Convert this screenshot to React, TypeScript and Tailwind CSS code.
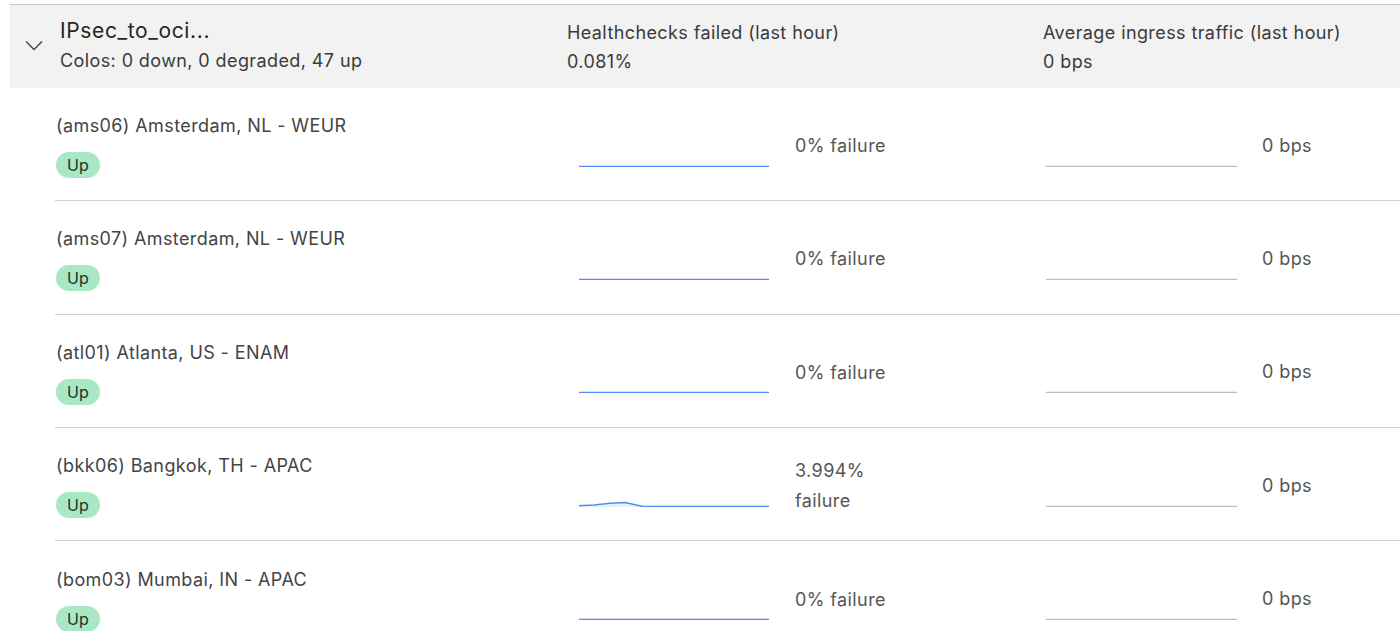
const colos = [
  { name: '(ams06) Amsterdam, NL - WEUR', failure: '0% failure', spike: false },
  { name: '(ams07) Amsterdam, NL - WEUR', failure: '0% failure', spike: false },
  { name: '(atl01) Atlanta, US - ENAM', failure: '0% failure', spike: false },
  { name: '(bkk06) Bangkok, TH - APAC', failure: '3.994% failure', spike: true },
  { name: '(bom03) Mumbai, IN - APAC', failure: '0% failure', spike: false },
]

function HealthSpark({ spike }: { spike: boolean }) {
  const line = spike
    ? 'M0 38.8 L15 38 L31 36.2 L46 35.6 L64 39.5 L190 39.5'
    : 'M0 39.5 L190 39.5'
  return (
    <svg width="190" height="40" viewBox="0 0 190 40" className="block">
      {spike ? <path d={`${line} L190 40 L0 40 Z`} fill="#e9f1fd" /> : null}
      <path d={line} fill="none" stroke="#4f8ff5" strokeWidth="1.5" />
    </svg>
  )
}

function TrafficSpark() {
  return (
    <svg width="191" height="40" viewBox="0 0 191 40" className="block">
      <path d="M0 39.5 L191 39.5" fill="none" stroke="#bdbdbd" strokeWidth="1.5" />
    </svg>
  )
}

export default function App() {
  return (
    <div className="min-h-screen bg-white pt-1 pl-[10px] font-['Inter','Noto_Sans',sans-serif] tracking-[0.025em] text-[#3d3d3d]">
      <header className="flex h-[84px] border-t border-[#c8c8c8] bg-[#f2f2f2]">
        <div className="flex w-[50px] items-start justify-center pt-[35px] pr-[2px]">
          <svg width="18" height="11" viewBox="0 0 18 11" fill="none">
            <path d="M1 1.5 L9 9.5 L17 1.5" stroke="#444" strokeWidth="1.4" />
          </svg>
        </div>
        <div className="w-[507px] pt-[12px]">
          <p className="text-[21px] leading-[28px] tracking-[0.03em] text-[#262626]">IPsec_to_oci...</p>
          <p className="mt-[4px] text-[18px] leading-[24px] text-[#3a3a3a]">Colos: 0 down, 0 degraded, 47 up</p>
        </div>
        <div className="w-[476px] pt-[15px] text-[18px] leading-[26px] text-[#3a3a3a]">
          <p>Healthchecks failed (last hour)</p>
          <p className="mt-[3px]">0.081%</p>
        </div>
        <div className="flex-1 pt-[15px] text-[18px] leading-[26px] text-[#3a3a3a]">
          <p>Average ingress traffic (last hour)</p>
          <p className="mt-[3px]">0 bps</p>
        </div>
      </header>

      <div className="ml-[45px]">
        {colos.map((colo, i) => (
          <div
            key={colo.name}
            className={`flex h-[113.3px] items-center ${i < colos.length - 1 ? 'border-b border-[#cfcfcf]' : ''}`}
          >
            <div className="w-[524px] pt-[4px] pl-px">
              <p className="text-[18px] leading-[24px] text-[#444]">{colo.name}</p>
              <span className="mt-[14px] inline-flex h-[26px] items-center rounded-full bg-[#a8e8c4] px-[11px] text-[16px] tracking-normal text-[#1f3328]">
                Up
              </span>
            </div>
            <div className="w-[216px] pt-[5px]">
              <HealthSpark spike={colo.spike} />
            </div>
            <div className="w-[251px] pt-[4px]">
              <p className="w-[100px] text-[18px] leading-[30px] text-[#555]">{colo.failure}</p>
            </div>
            <div className="w-[216px] pt-[5px]">
              <TrafficSpark />
            </div>
            <div className="flex-1 pt-[2px] text-[18px] text-[#555]">0 bps</div>
          </div>
        ))}
      </div>
    </div>
  )
}
